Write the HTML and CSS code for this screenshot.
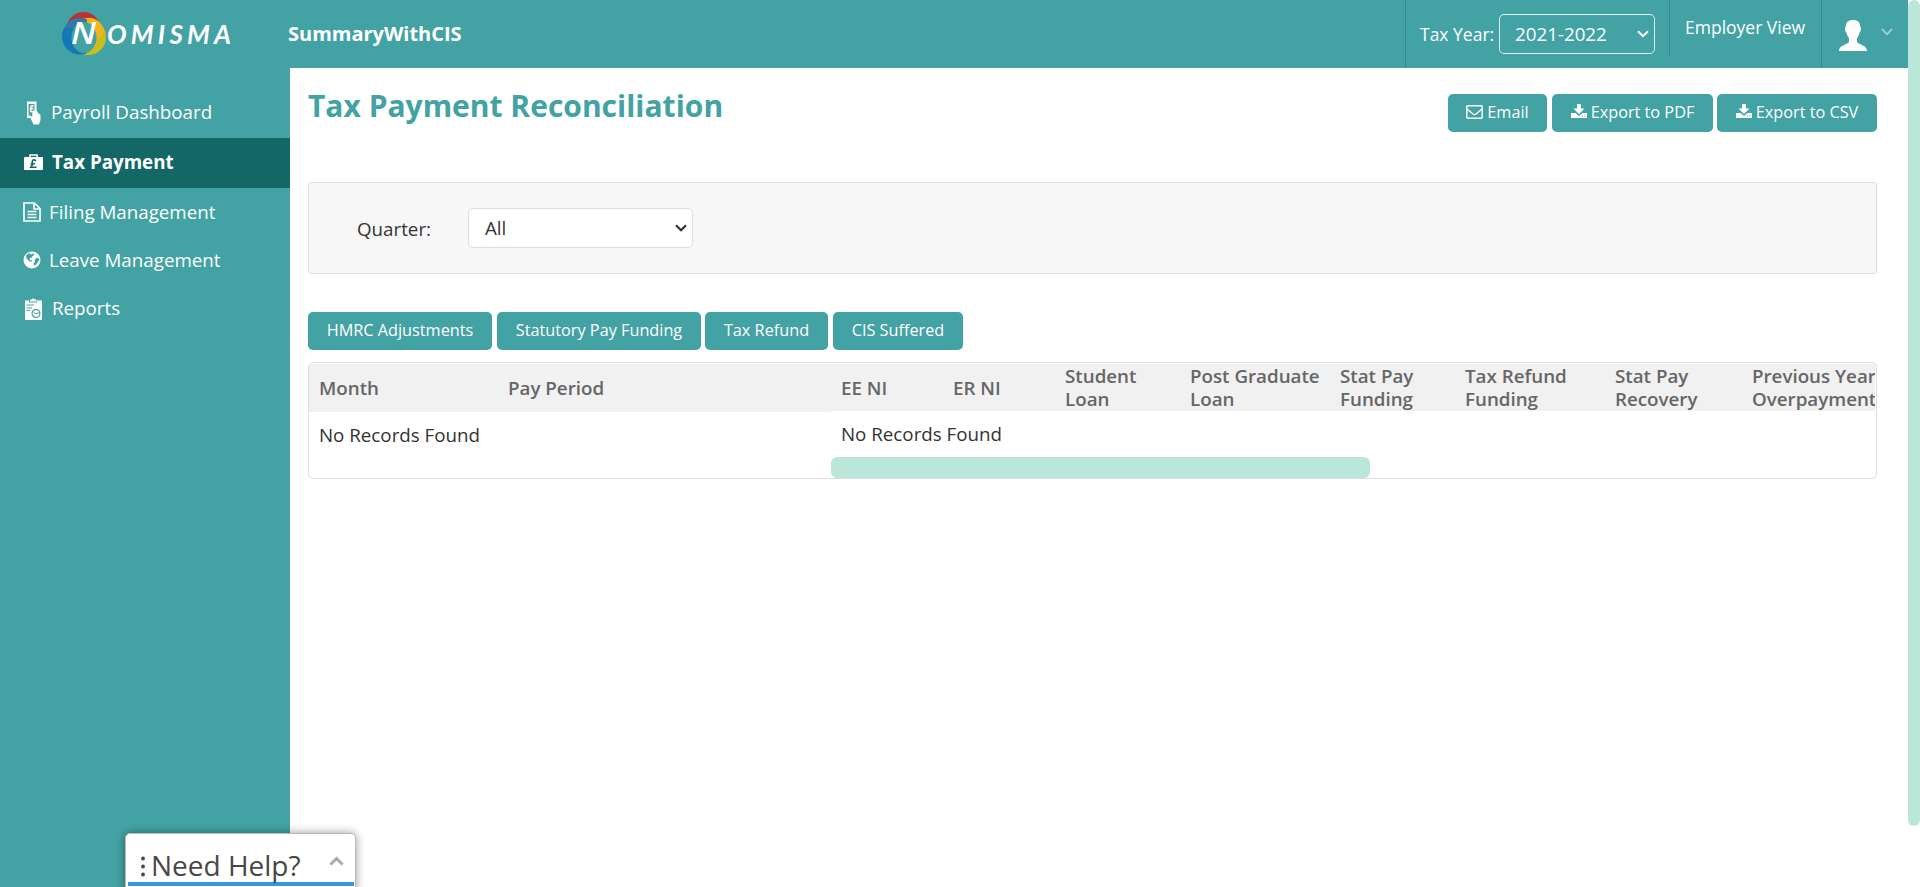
FILE: index.html
```html
<!DOCTYPE html>
<html lang="en">
<head>
<meta charset="utf-8">
<title>Tax Payment Reconciliation</title>
<link rel="stylesheet" href="styles.css">
</head>
<body>
<header class="topbar">
  <div class="logo">
    <svg width="174" height="46" viewBox="0 0 174 46">
      <circle cx="23.500" cy="19" r="17" fill="#b83238"/>
      <circle cx="28" cy="27" r="18" fill="#cdbd1c"/>
      <path d="M20 10Q38 2 45 22L38 29Z" fill="#f0b61c"/>
      <path d="M20 8.500A18 18 0 0 0 20 44.500Q24 45 27 43L27 9.500Q24 8.200 20 8.500Z" fill="#1478b4"/>
      <path d="M7 14Q14 5 27 10V18H5Z" fill="#3578a8"/>
      <ellipse cx="24" cy="27.500" rx="12.500" ry="15.500" fill="#43a2a3"/>
      <text x="11" y="34" class="logo-n" textLength="25" lengthAdjust="spacingAndGlyphs">N</text>
      <text x="47" y="34" class="logo-rest" textLength="124">OMISMA</text>
    </svg>
  </div>
  <div class="company">SummaryWithCIS</div>
  <div class="tax-year">
    <span>Tax Year:</span>
    <div class="select select-dark"><span>2021-2022</span><svg width="12" height="8" viewBox="0 0 12 8"><path d="M1 1.2L6 6.2L11 1.2" fill="none" stroke="#fff" stroke-width="2"/></svg></div>
  </div>
  <div class="employer">Employer View</div>
  <div class="user">
    <svg width="28" height="31" viewBox="0 0 28 31"><path d="M14 0C18.500 0 21.500 2.500 21.300 7C22.500 7.500 22 11.500 20.600 12.500C20 15.500 18.800 17 18 18V22C20 25 28 25 28 31H0C0 25 8 25 10 22V18C9.200 17 8 15.500 7.400 12.500C6 11.500 5.500 7.500 6.700 7C6.500 2.500 9.500 0 14 0Z" fill="#fff"/></svg>
    <svg class="user-caret" width="12" height="8" viewBox="0 0 12 8"><path d="M1 1L6 6.300L11 1" fill="none" stroke="#a9d3d3" stroke-width="1.800"/></svg>
  </div>
</header>
<div class="body">
  <nav class="sidebar">
    <a class="nav nav-payroll">
      <svg width="16" height="24" viewBox="0 0 16 24"><path fill-rule="evenodd" d="M2 .5H11.500V9L13 12L15.500 14V19L14 23.500H8.500L5.500 17H2ZM3.500 3V14.500H5L7.500 16V12L9.500 11V3Z" fill="#fff"/><path d="M8.500 5.500Q6.500 3.500 5.800 6V10.500M4.800 7.500h3.500M4.800 10.500H8.500" fill="none" stroke="#fff" stroke-width="1.300"/><path d="M7.500 11Q8.500 8 10 10V16H7.500Z" fill="#fff"/></svg>
      <span>Payroll Dashboard</span></a>
    <a class="nav nav-tax">
      <svg width="19" height="16" viewBox="0 0 19 16"><path d="M6 4V1H13V4" fill="none" stroke="#fff" stroke-width="1.600"/><rect x="0" y="3" width="19" height="13" rx="1" fill="#fff"/><path d="M12 6.800Q9 4.500 8.300 7.500V11L6.800 13.300H12.500M6.500 9.800H11" fill="none" stroke="#136766" stroke-width="1.600"/></svg>
      <span>Tax Payment</span></a>
    <a class="nav nav-filing">
      <svg width="18" height="20" viewBox="0 0 18 20"><path d="M1 1H11.500L17 6.500V19H1ZM11 1V7H17M4.500 9.500H13.500M4.500 12.500H13.500M4.500 15.500H13.500" fill="none" stroke="#fff" stroke-width="1.700"/></svg>
      <span>Filing Management</span></a>
    <a class="nav nav-leave">
      <svg width="18" height="18" viewBox="0 0 18 18"><circle cx="9" cy="9" r="8.500" fill="#fff"/><path d="M3 4.500L6 2L8 3.500L10.500 2.500L11.500 4L9.500 5L9 6.500L7 7L6.500 9L9 9.500L8.500 11L6 10L3.500 7.500ZM11.500 9L14 6.500L16.500 8L15 11L13 13.500L11.500 15L10.500 12L12 11Z" fill="#43a2a3"/></svg>
      <span>Leave Management</span></a>
    <a class="nav nav-reports">
      <svg width="17" height="22" viewBox="0 0 17 22"><path d="M0 2.500H4V4.500H12V2.500H17V22H0ZM5 1.500H7L8.200 0L9.500 1.500H11.500V3.500H5Z" fill="#fff"/><path d="M1.500 7H9M1.500 10H7M1.500 12.500H5" stroke="#43a2a3"/><circle cx="11" cy="15.500" r="3.900" fill="none" stroke="#43a2a3" stroke-width="1.300"/><path d="M8.500 14L11 16L14.500 14.500" fill="none" stroke="#43a2a3"/></svg>
      <span>Reports</span></a>
  </nav>
  <main class="content">
    <div class="title-row">
      <h1>Tax Payment Reconciliation</h1>
      <div class="actions">
        <button class="btn w-email"><svg width="17" height="14" viewBox="0 0 17 14"><rect x=".8" y=".8" width="15.400" height="12.400" rx="1.300" fill="none" stroke="#fff" stroke-width="1.500"/><path d="M1 4L7 9Q8.500 10 10 9L16 4" fill="none" stroke="#fff" stroke-width="1.500"/></svg><span>Email</span></button>
        <button class="btn w-pdf"><svg class="dl" width="16" height="14" viewBox="0 0 16 14"><path d="M6 0H10V4.500H13.500L8 10L2.500 4.500H6ZM0 9H4.500L8 12L11.500 9H16V14H0Z" fill="#fff"/><path d="M11 12h1M13.200 12h1" stroke="#43a2a3"/></svg><span>Export to PDF</span></button>
        <button class="btn w-csv"><svg class="dl" width="16" height="14" viewBox="0 0 16 14"><path d="M6 0H10V4.500H13.500L8 10L2.500 4.500H6ZM0 9H4.500L8 12L11.500 9H16V14H0Z" fill="#fff"/><path d="M11 12h1M13.200 12h1" stroke="#43a2a3"/></svg><span>Export to CSV</span></button>
      </div>
    </div>
    <section class="filter">
      <label>Quarter:</label>
      <div class="select select-light"><span>All</span><svg width="12" height="8" viewBox="0 0 12 8"><path d="M1 1.200L6 6.200L11 1.200" fill="none" stroke="#333" stroke-width="2.200"/></svg></div>
    </section>
    <div class="tabs">
      <button class="btn w-hmrc">HMRC Adjustments</button>
      <button class="btn w-stat">Statutory Pay Funding</button>
      <button class="btn w-refund">Tax Refund</button>
      <button class="btn w-cis">CIS Suffered</button>
    </div>
    <section class="grid">
      <div class="pane pane-left">
        <div class="head"><div>Month</div><div>Pay Period</div></div>
        <div class="empty">No Records Found</div>
      </div>
      <div class="pane pane-right">
        <div class="head"><div>EE NI</div><div>ER NI</div><div>Student<br>Loan</div><div>Post Graduate<br>Loan</div><div>Stat Pay<br>Funding</div><div>Tax Refund<br>Funding</div><div>Stat Pay<br>Recovery</div><div>Previous Year<br>Overpayment</div></div>
        <div class="empty">No Records Found</div>
        <div class="hscroll"></div>
      </div>
    </section>
  </main>
</div>
<div class="page-scroll"></div>
<div class="help">
  <div class="help-row"><svg width="4" height="21" viewBox="0 0 4 21"><g fill="#484848"><circle cx="2" cy="2.500" r="1.900"/><circle cx="2" cy="10.500" r="1.900"/><circle cx="2" cy="18.500" r="1.900"/></g></svg><span>Need Help?</span><svg class="help-caret" width="15" height="10" viewBox="0 0 15 10"><path d="M1.500 8.500L7.500 2.500L13.500 8.500" fill="none" stroke="#aaa" stroke-width="3"/></svg></div>
  <div class="help-line"></div>
</div>
</body>
</html>
```
FILE: styles.css
```css
* { box-sizing: border-box; }
body { margin: 0; height: 887px; overflow: hidden; background: #fff; color: #333; font: 18.75px/24px "Open Sans", sans-serif; }
svg { display: block; flex: none; }
.topbar { display: flex; width: 1908px; height: 68px; background: #43a2a3; color: #fff; }
.logo { width: 288px; padding: 10px 0 0 60px; }
.logo-n { font: italic 600 30px "Open Sans", sans-serif; fill: #fff; }
.logo-rest { font: italic 700 26px Lato, sans-serif; fill: #fff; }
.company { flex: 1; padding-top: 22px; font-weight: 700; font-size: 20px; }
.tax-year { display: flex; width: 264px; padding: 14px 0 0 14px; border-left: 1px solid #2f8c8d; line-height: 40px; font-size: 17.5px; }
.tax-year > span { width: 79px; white-space: nowrap; }
.select { display: flex; align-items: center; justify-content: space-between; border-radius: 5px; height: 40px; }
.select-dark { width: 156px; height: 40px; border: 1px solid #e4f1f1; padding: 0 5px 0 15px; font-size: 18.75px; }
.employer { width: 152px; height: 56px; padding: 15px 0 0 15px; border-left: 1px solid #2f8c8d; font-size: 17.5px; white-space: nowrap; }
.user { display: flex; width: 87px; padding: 20px 0 0 17px; gap: 14px; border-left: 1px solid #2f8c8d; }
.user-caret { margin-top: 8px; }
.body { display: flex; height: 819px; }
.sidebar { width: 290px; padding-top: 20px; background: #43a2a3; color: #fff; }
.nav { display: flex; align-items: center; height: 48px; font-size: 18.75px; white-space: nowrap; }
.nav-payroll { height: 50px; padding: 0 0 2px 25px; gap: 10px; }
.nav-tax { height: 50px; padding: 0 0 2px 24px; gap: 9px; background: #136766; font-weight: 700; }
.nav-filing { padding-left: 23px; gap: 8px; }
.nav-leave { padding-left: 23px; gap: 8px; }
.nav-reports { padding-left: 25px; gap: 10px; }
.nav-payroll svg, .nav-reports svg { margin-top: 2px; }
.content { width: 1587px; padding: 20px 0 0 18px; }
.title-row { display: flex; justify-content: space-between; height: 94px; }
h1 { margin: 0; font-size: 30px; line-height: 36px; font-weight: 700; color: #43a2a3; white-space: nowrap; }
.actions { display: flex; gap: 4px; padding-top: 6px; height: 44px; }
.btn { display: flex; align-items: center; justify-content: center; gap: 4px; height: 38px; padding: 0 0 2px; border: 0; border-radius: 5px; background: #43a2a3; color: #fff; font: 16.25px "Open Sans", sans-serif; white-space: nowrap; }
.dl { margin-top: -2px; }
.w-email { width: 99px; margin-right: 1px; } .w-pdf { width: 161px; } .w-csv { width: 160px; }
.filter { display: flex; height: 92px; padding: 25px 0 0 48px; border: 1px solid #ddd; border-radius: 3px; background: #f7f7f7; }
.filter label { width: 111px; line-height: 41px; }
.select-light { width: 225px; padding: 0 5px 0 16px; border: 1px solid #ddd; background: #fff; }
.tabs { display: flex; gap: 4px; margin-top: 38px; }
.w-hmrc { width: 184px; margin-right: 1px; } .w-stat { width: 204px; } .w-refund { width: 123px; margin-right: 1px; } .w-cis { width: 130px; }
.grid { display: flex; height: 117px; margin-top: 12px; padding: 1px 1px 0 0; border: 1px solid #ddd; border-radius: 5px; overflow: hidden; }
.pane-left { width: 522px; flex: none; }
.pane-right { width: 1045px; overflow: hidden; }
.head { display: grid; height: 48px; align-items: center; background: #f1f1f1; color: #666; font-weight: 600; font-size: 18.75px; line-height: 23px; white-space: nowrap; }
.pane-left .head { grid-template-columns: 189px 333px; padding-left: 10px; padding-bottom: 2px; }
.pane-right .head { height: 47px; grid-template-columns: 112px 112px 125px 150px 125px 150px 137px 150px; padding-left: 10px; padding-bottom: 2px; }
.empty { height: 46px; padding-left: 10px; line-height: 45px; white-space: nowrap; }
.hscroll { width: 539px; height: 21px; border-radius: 6px; background: #bbe6da; }
.page-scroll { position: absolute; left: 1908px; top: 0; width: 12px; height: 826px; border-radius: 6px; background: #bbe6da; }
.help { position: absolute; left: 125px; top: 833px; width: 231px; height: 60px; border: 1px solid #bbb; border-radius: 5px; background: #fff; box-shadow: 0 0 10px rgba(0,0,0,.4); }
.help-row { display: flex; align-items: center; height: 48px; padding: 16px 11px 0 15px; color: #484848; font-weight: 500; font-size: 28px; white-space: nowrap; }
.help-row span { margin: -2px 0 0 6px; flex: 1; }
.help-caret { margin-top: -10px; }
.help-line { height: 4px; margin: 0 1px 0 2px; background: #3498db; }
```
